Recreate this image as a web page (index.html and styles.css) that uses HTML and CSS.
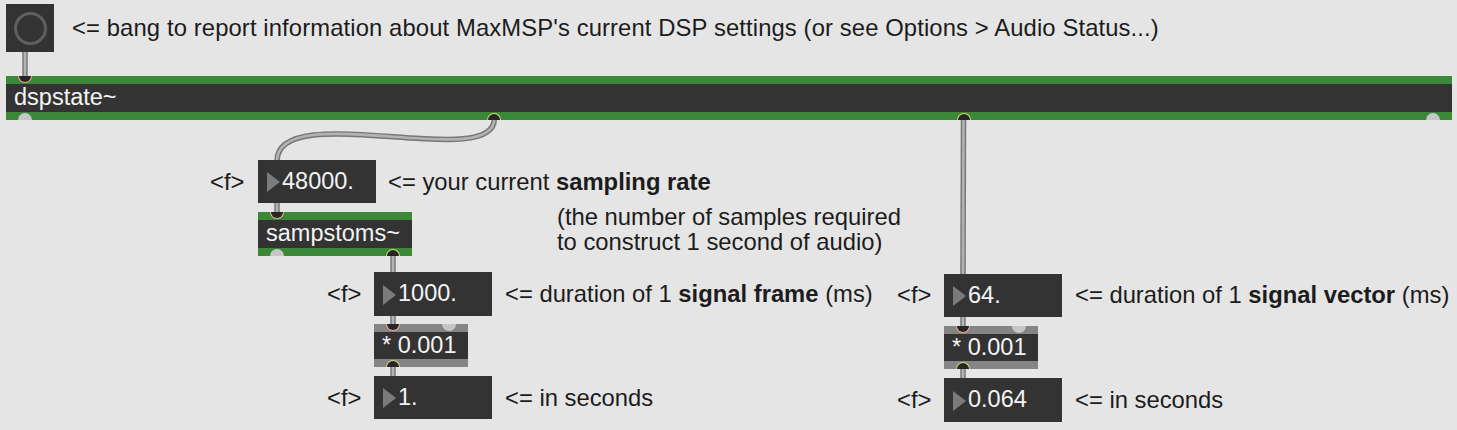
FILE: index.html
```html
<!DOCTYPE html>
<html lang="en">
<head>
<meta charset="utf-8">
<title>dspstate~ help</title>
<link rel="stylesheet" href="styles.css">
</head>
<body>
<div class="patcher">
  <svg class="cables" width="1457" height="430" viewBox="0 0 1457 430">
    <g class="cable-outer">
      <path d="M25 52 L25 77"/>
      <path d="M494.3 119 C494.3 172 277 98 277 161"/>
      <path d="M277 203 L277 213"/>
      <path d="M393 255 L393 273"/>
      <path d="M393 316 L393 325"/>
      <path d="M393 366 L393 377"/>
      <path d="M963.5 119 L963 275"/>
      <path d="M963 317 L963 327"/>
      <path d="M963 368 L963 379"/>
    </g>
    <g class="cable-inner">
      <path d="M25 52 L25 77"/>
      <path d="M494.3 119 C494.3 172 277 98 277 161"/>
      <path d="M277 203 L277 213"/>
      <path d="M393 255 L393 273"/>
      <path d="M393 316 L393 325"/>
      <path d="M393 366 L393 377"/>
      <path d="M963.5 119 L963 275"/>
      <path d="M963 317 L963 327"/>
      <path d="M963 368 L963 379"/>
    </g>
  </svg>

  <div class="node bang at-bang"><span class="bang-ring"></span></div>
  <p class="node comment wide at-c-bang">&lt;= bang to report information about MaxMSP's current DSP settings (or see Options &gt; Audio Status...)</p>

  <div class="node obj signal at-dspstate">
    <div class="bar bar-top"><span class="port in on"></span></div>
    <div class="label">dspstate~</div>
    <div class="bar bar-bottom"><span class="port out"></span><span class="port out on"></span><span class="port out on"></span><span class="port out"></span></div>
  </div>

  <p class="node comment at-f1">&lt;f&gt;</p>
  <div class="node number at-n48000"><span class="tri"></span><span class="num">48000.</span></div>
  <p class="node comment at-c-rate">&lt;= your current <b>sampling rate</b></p>
  <p class="node comment multi at-c-samples">(the number of samples required<br>to construct 1 second of audio)</p>

  <div class="node obj signal at-sampstoms">
    <div class="bar bar-top"><span class="port in on"></span></div>
    <div class="label">sampstoms~</div>
    <div class="bar bar-bottom"><span class="port out"></span><span class="port out on"></span></div>
  </div>

  <p class="node comment at-f2">&lt;f&gt;</p>
  <div class="node number at-n1000"><span class="tri"></span><span class="num">1000.</span></div>
  <p class="node comment at-c-frame">&lt;= duration of 1 <b>signal frame</b> (ms)</p>

  <div class="node obj control at-mul1">
    <div class="bar bar-top"><span class="port in on"></span><span class="port in"></span></div>
    <div class="label">* 0.001</div>
    <div class="bar bar-bottom"><span class="port out on"></span></div>
  </div>

  <p class="node comment at-f3">&lt;f&gt;</p>
  <div class="node number at-n1"><span class="tri"></span><span class="num">1.</span></div>
  <p class="node comment at-c-sec1">&lt;= in seconds</p>

  <p class="node comment at-f4">&lt;f&gt;</p>
  <div class="node number at-n64"><span class="tri"></span><span class="num">64.</span></div>
  <p class="node comment at-c-vector">&lt;= duration of 1 <b>signal vector</b> (ms)</p>

  <div class="node obj control at-mul2">
    <div class="bar bar-top"><span class="port in on"></span><span class="port in"></span></div>
    <div class="label">* 0.001</div>
    <div class="bar bar-bottom"><span class="port out on"></span></div>
  </div>

  <p class="node comment at-f5">&lt;f&gt;</p>
  <div class="node number at-n064"><span class="tri"></span><span class="num">0.064</span></div>
  <p class="node comment at-c-sec2">&lt;= in seconds</p>
</div>
</body>
</html>
```
FILE: styles.css
```css
html, body {
  margin: 0;
  padding: 0;
  background: #e5e5e5;
}

.patcher {
  position: relative;
  width: 1457px;
  height: 430px;
  overflow: hidden;
  background: #e5e5e5;
  font-family: "Liberation Sans", Arial, Helvetica, sans-serif;
  font-size: 23.5px;
  color: #1c1c1c;
}

/* cables */
.cables {
  position: absolute;
  left: 0;
  top: 0;
}
.cables path {
  fill: none;
  stroke-linecap: butt;
}
.cable-outer path {
  stroke: #777777;
  stroke-width: 5.5;
}
.cable-inner path {
  stroke: #b3b3b3;
  stroke-width: 2.6;
}

/* every box sits at its own place on the patcher canvas */
.node {
  position: absolute;
  margin: 0;
  box-sizing: border-box;
}

/* comments */
.comment {
  font-size: 23.8px;
  line-height: 24px;
  white-space: nowrap;
}
.comment.wide {
  letter-spacing: 0.12px;
}
.comment b {
  font-weight: bold;
}
.comment.multi {
  line-height: 24.5px;
}

/* bang */
.bang {
  width: 48px;
  height: 48px;
  background: #333333;
  display: flex;
  align-items: center;
  justify-content: center;
}
.bang-ring {
  width: 33px;
  height: 33px;
  box-sizing: border-box;
  border: 3.3px solid #5f5f5f;
  border-radius: 50%;
}

/* object boxes */
.obj {
  display: flex;
  flex-direction: column;
  color: #f4f4f4;
}
.bar {
  height: 8px;
  display: flex;
  justify-content: space-between;
  padding: 0 12px;
}
.bar-top { align-items: flex-start; }
.bar-bottom { align-items: flex-end; }
.signal .bar { background: #3b8839; }
.control .bar { background: #858585; }
.label {
  background: #333333;
  flex: 1;
  display: flex;
  align-items: center;
  padding-left: 8px;
  line-height: 23.5px;
  white-space: nowrap;
}

/* inlets / outlets */
.port {
  width: 14px;
  height: 7px;
  box-sizing: border-box;
  background: #c6c6c6;
  flex: none;
}
.port.in { border-radius: 0 0 7px 7px; }
.port.out { border-radius: 7px 7px 0 0; }
.port.in.on {
  background: #262626;
  border: 1.5px solid #f0a794;
  border-top: none;
}
.port.out.on {
  background: #262626;
  border: 1.5px solid #dcd97a;
  border-bottom: none;
}

/* number boxes */
.number {
  width: 118px;
  height: 43px;
  background: #333333;
  color: #f4f4f4;
  display: flex;
  align-items: center;
  line-height: 23.5px;
}
.tri {
  width: 0;
  height: 0;
  margin: 1px 2px 0 9px;
  border-left: 13px solid #7b7b7b;
  border-top: 10.8px solid transparent;
  border-bottom: 10.8px solid transparent;
}

/* placements on the canvas */
.at-bang { left: 6px; top: 4px; }
.at-c-bang { left: 72px; top: 16px; }

.at-dspstate { left: 6px; top: 76px; width: 1446px; height: 44px; }

.at-f1 { left: 210px; top: 170px; }
.at-n48000 { left: 258px; top: 160px; }
.at-c-rate { left: 388px; top: 170px; }
.at-c-samples { left: 557px; top: 205px; }

.at-sampstoms { left: 258px; top: 212px; width: 154px; height: 44px; }

.at-f2 { left: 327px; top: 281.5px; }
.at-n1000 { left: 374px; top: 272px; height: 44px; }
.at-c-frame { left: 505px; top: 281.5px; }

.at-mul1 { left: 374px; top: 324px; width: 94px; height: 43px; }

.at-f3 { left: 327px; top: 386px; }
.at-n1 { left: 374px; top: 376px; }
.at-c-sec1 { left: 505px; top: 386px; }

.at-f4 { left: 897px; top: 282.5px; }
.at-n64 { left: 944px; top: 274px; }
.at-c-vector { left: 1075px; top: 282.5px; }

.at-mul2 { left: 944px; top: 326px; width: 94px; height: 43px; }

.at-f5 { left: 897px; top: 388px; }
.at-n064 { left: 944px; top: 378px; height: 44px; }
.at-c-sec2 { left: 1075px; top: 388px; }
```
